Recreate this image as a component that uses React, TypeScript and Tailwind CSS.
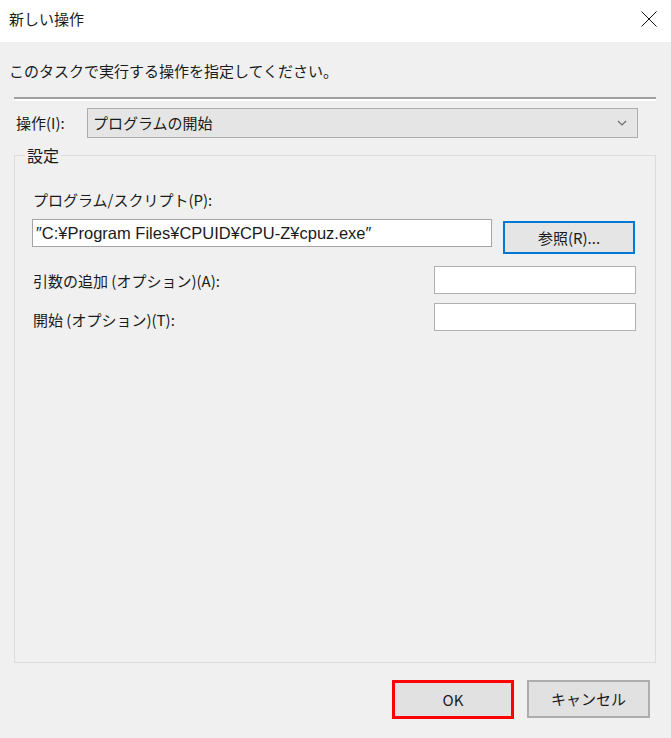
import * as React from "react";

const jp = { fontFamily: '"Noto Sans CJK JP", "Noto Sans", sans-serif' };
const latin = { fontFamily: '"Liberation Sans", "Noto Sans CJK JP", sans-serif' };

function CloseIcon() {
  return (
    <svg width="16" height="16" viewBox="0 0 16 16" fill="none" stroke="#111" strokeWidth="1">
      <path d="M0.5 0.5 L15.5 15.5 M15.5 0.5 L0.5 15.5" />
    </svg>
  );
}

function Chevron() {
  return (
    <svg width="10" height="6" viewBox="0 0 10 6" fill="none" stroke="#6b6b6b" strokeWidth="1.2">
      <path d="M1 1 L5 5 L9 1" />
    </svg>
  );
}

export default function App() {
  return (
    <div
      className="w-[671px] h-[738px] bg-[#f0f0f0] text-[15px] text-[#1a1a1a] overflow-hidden"
      style={jp}
    >
      {/* title bar */}
      <div className="h-[42px] bg-white flex items-center justify-between pl-[9px] pr-[14px]">
        <span className="leading-[20px] -mt-[4px]">新しい操作</span>
        <div className="-mt-[4px]">
          <CloseIcon />
        </div>
      </div>

      <div className="px-[14px]">
        <p className="mt-[19px] leading-[20px] -ml-[5px]">このタスクで実行する操作を指定してください。</p>

        <div className="mt-[16px] h-[4px] w-[642px] border-t-2 border-b-2 border-t-[#a0a0a0] border-b-white" />

        <div className="mt-[7px] flex items-center">
          <span className="w-[73px] pl-[2px] leading-[20px]">操作(I):</span>
          <div className="w-[551px] h-[30px] border border-[#adadad] bg-[#e5e5e5] flex items-center justify-between pl-[5px] pr-[10px]">
            <span className="leading-[20px]">プログラムの開始</span>
            <Chevron />
          </div>
        </div>

        <div className="relative mt-[17px] h-[508px] w-[642px] border border-[#dcdcdc] pl-[17px] pr-[19px] pt-[34px]">
          <span className="absolute -top-[11px] left-[10px] px-[2px] bg-[#f0f0f0] leading-[20px] text-[16px]">設定</span>

          <div className="pl-[1px] leading-[20px]">プログラム/スクリプト(P):</div>

          <div className="mt-[9px] flex items-start gap-[11px]">
            <div
              className="w-[460px] h-[28px] border border-[#a5a5a5] bg-white flex items-center pl-[3px] text-[16.5px] leading-[20px]"
              style={latin}
            >
              ″C:¥Program Files¥CPUID¥CPU-Z¥cpuz.exe″
            </div>
            <button
              type="button"
              className="mt-[2px] w-[132px] h-[33px] border-2 border-[#0078d7] bg-[#e5e5e5] flex items-center justify-center leading-[20px]"
            >
              参照(R)...
            </button>
          </div>

          <div className="mt-[12px] flex items-center justify-between">
            <span className="pl-[1px] leading-[20px] mt-[2px]">引数の追加 (オプション)(A):</span>
            <div className="w-[202px] h-[28px] border border-[#b0b0b0] bg-white" />
          </div>

          <div className="mt-[9px] flex items-center justify-between">
            <span className="pl-[1px] leading-[20px] mt-[5px]">開始 (オプション)(T):</span>
            <div className="w-[202px] h-[28px] border border-[#b0b0b0] bg-white" />
          </div>
        </div>

        <div className="mt-[17px] flex justify-end gap-[13px] pr-[7px]">
          <button
            type="button"
            className="w-[122px] h-[39px] border-[3px] border-[#ff0000] bg-[#e1e1e1] flex items-center justify-center leading-[20px]"
          >
            OK
          </button>
          <button
            type="button"
            className="w-[123px] h-[38px] border-2 border-[#adadad] bg-[#e1e1e1] flex items-center justify-center leading-[20px]"
          >
            キャンセル
          </button>
        </div>
      </div>
    </div>
  );
}
